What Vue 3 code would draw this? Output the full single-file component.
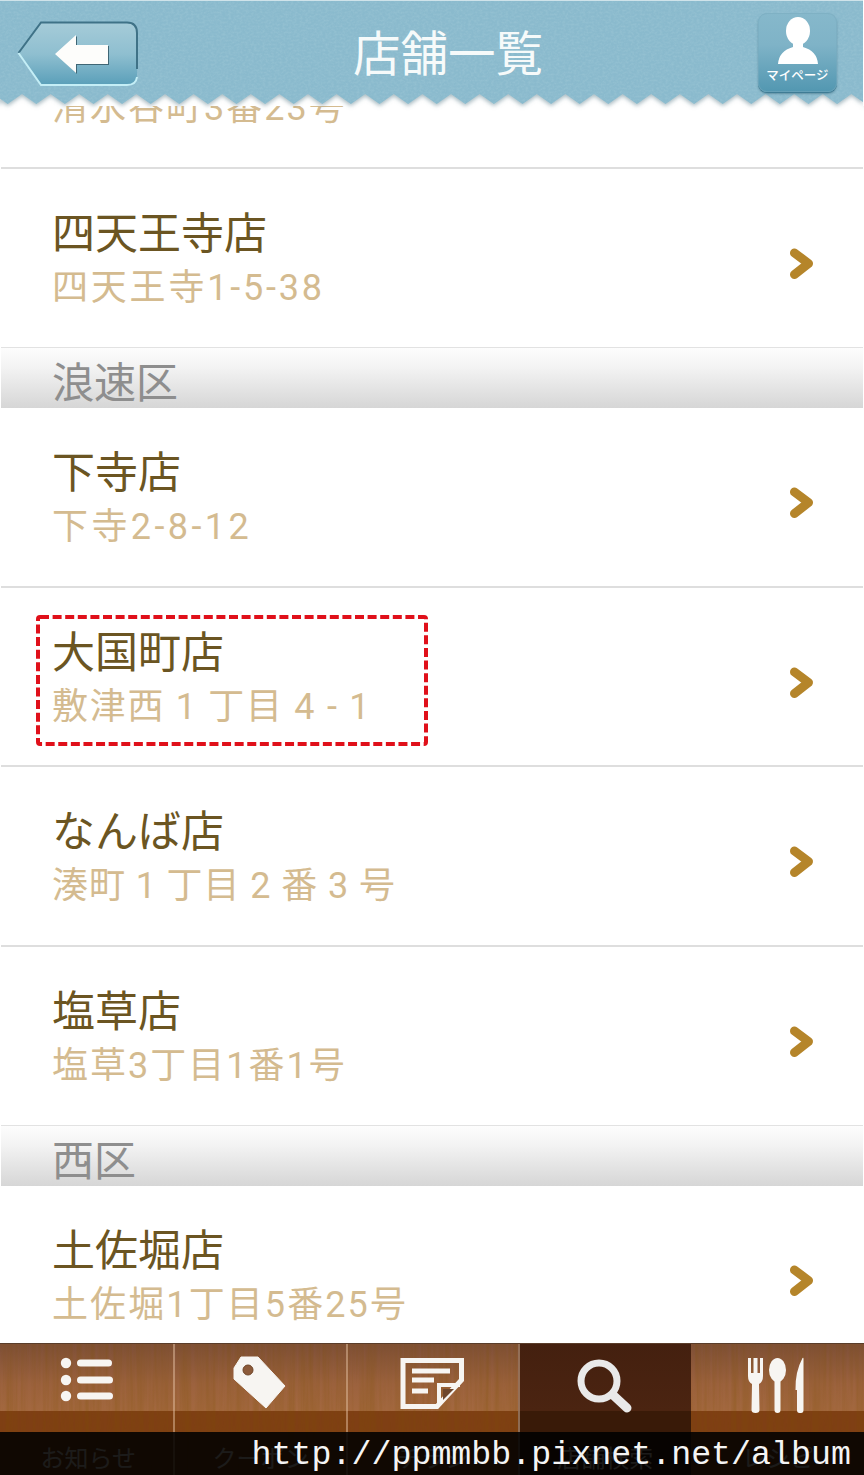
<script setup>
const rows = [
  { type: 'shop', name: '清水谷店', addr: '清水谷町3番23号', track: 2 },
  { type: 'shop', name: '四天王寺店', addr: '四天王寺1-5-38', track: 2.8 },
  { type: 'area', name: '浪速区' },
  { type: 'shop', name: '下寺店', addr: '下寺2-8-12', track: 3.4 },
  { type: 'shop', name: '大国町店', addr: '敷津西 1 丁目 4 - 1', track: 1.7, marked: true },
  { type: 'shop', name: 'なんば店', addr: '湊町 1 丁目 2 番 3 号', track: 0.9 },
  { type: 'shop', name: '塩草店', addr: '塩草3丁目1番1号', track: 2 },
  { type: 'area', name: '西区' },
  { type: 'shop', name: '土佐堀店', addr: '土佐堀1丁目5番25号', track: 2.1 }
]

const period = 28.6
const edge = []
for (let i = 0; i < 32; i++) {
  const x = 22 + period * (i - 1)
  edge.push(`${x.toFixed(1)},94`)
  edge.push(`${(x + period / 2).toFixed(1)},104`)
}
const wave = ['0,0', '864,0', '863,104', ...edge.reverse(), '0,104'].join(' ')
</script>

<template>
  <div class="screen">
    <div class="list">
      <template v-for="row in rows" :key="row.name">
        <div v-if="row.type === 'area'" class="area">{{ row.name }}</div>
        <div v-else class="shop">
          <div class="name">{{ row.name }}</div>
          <div class="addr" :style="{ letterSpacing: row.track + 'px' }">{{ row.addr }}</div>
          <svg class="chev" width="30" height="36" viewBox="0 0 30 36">
            <path d="M8.500 7 L22.500 17.500 L8.500 28.500" fill="none" stroke="#b5852a" stroke-width="9" stroke-linejoin="round" stroke-linecap="round" />
          </svg>
          <svg v-if="row.marked" class="mark" width="392" height="131" viewBox="0 0 392 131">
            <rect x="2" y="2" width="388" height="127" rx="2" fill="none" stroke="#e0101a" stroke-width="4" stroke-dasharray="9 3.600" />
          </svg>
        </div>
      </template>
    </div>

    <nav class="tabs">
      <svg class="wood" width="864" height="132">
        <defs>
          <filter id="grain" x="0" y="0" width="100%" height="100%">
            <feTurbulence type="fractalNoise" baseFrequency=".22 .008" numOctaves="3" seed="4" />
            <feColorMatrix values="0 0 0 0 .2  0 0 0 0 .08  0 0 0 0 0  0 0 0 1.1 -.3" />
          </filter>
          <linearGradient id="woodTop" x1="0" y1="0" x2="0" y2="1">
            <stop offset="0" stop-color="#7f5038" />
            <stop offset=".6" stop-color="#9c623e" />
            <stop offset="1" stop-color="#a3683f" />
          </linearGradient>
        </defs>
        <rect width="864" height="67" fill="url(#woodTop)" />
        <rect y="67" width="864" height="65" fill="#7f3f14" />
        <rect width="864" height="132" filter="url(#grain)" opacity=".4" />
      </svg>

      <div class="tab">
        <svg class="tab-icon" width="170" height="90" viewBox="0 0 170 90" fill="#f7f5f2">
          <circle cx="63" cy="19" r="5.200" /><circle cx="63" cy="36" r="5.200" /><circle cx="63" cy="52" r="5.200" />
          <rect x="74" y="15.500" width="35" height="7" rx="3.500" /><rect x="74" y="32.500" width="36" height="7" rx="3.500" /><rect x="74" y="48.500" width="36" height="7" rx="3.500" />
        </svg>
        <span>お知らせ</span>
      </div>
      <div class="tab">
        <svg class="tab-icon" width="170" height="90" viewBox="0 0 170 90" fill="#f7f5f2">
          <path d="M58 24 L65 13 H82 L109 42 L90 64 L58 35 Z" stroke="#f7f5f2" stroke-width="1" stroke-linejoin="round" />
          <circle cx="72" cy="26" r="5" fill="#8c5a3a" stroke="#6f4528" stroke-width="1" />
        </svg>
        <span>クーポン</span>
      </div>
      <div class="tab">
        <svg class="tab-icon" width="170" height="90" viewBox="0 0 170 90" fill="none">
          <path d="M55 16.500 H113.500 V36 L89 62.500 H55 Z" stroke="#f7f5f2" stroke-width="5" />
          <path d="M64 27 H102 M64 36 H86 M64 47 H80" stroke="#f7f5f2" stroke-width="5" />
          <path d="M91 61 V41 H112" stroke="#f7f5f2" stroke-width="4" />
          <path d="M95 45 H106 L95 56 Z" fill="#6e472d" />
        </svg>
        <span>チラシ</span>
      </div>
      <div class="tab active">
        <svg class="tab-icon" width="170" height="90" viewBox="0 0 170 90" fill="none">
          <circle cx="79" cy="37" r="18" stroke="#e9e9e9" stroke-width="7" />
          <path d="M93 51 L107 64" stroke="#e9e9e9" stroke-width="9" stroke-linecap="round" />
        </svg>
        <span>店舗検索</span>
      </div>
      <div class="tab">
        <svg class="tab-icon" width="170" height="90" viewBox="0 0 170 90" fill="#f7f5f2">
          <path d="M55 14 H58 V29 H60.500 V14 H64.500 V29 H67 V14 H70 V32 Q70 38 66 40 L66.500 66 Q66.500 69 62.500 69 Q58.500 69 58.500 66 L59 40 Q55 38 55 32 Z" />
          <ellipse cx="84.500" cy="26" rx="8.500" ry="12" />
          <path d="M81.500 34 H87.500 V66 Q87.500 69 84.500 69 Q81.500 69 81.500 66 Z" />
          <path d="M106.500 69 Q104 69 104 66 V46 H102.500 Q102 28 109.500 14 Q110.500 13 110.500 15 V66 Q110.500 69 108 69 Z" />
        </svg>
        <span>レシピ</span>
      </div>
    </nav>

    <header class="head">
      <svg class="head-bg" width="864" height="112" viewBox="0 0 864 112">
        <defs>
          <filter id="paper" x="0" y="0" width="100%" height="100%">
            <feTurbulence type="fractalNoise" baseFrequency=".35 .5" numOctaves="3" seed="7" />
            <feColorMatrix values="0 0 0 0 .35  0 0 0 0 .58  0 0 0 0 .68  0 0 0 .9 -.32" />
            <feComposite in2="SourceAlpha" operator="in" />
          </filter>
          <filter id="drop" x="-2%" y="-2%" width="104%" height="120%">
            <feDropShadow dx="0" dy="2" stdDeviation="2" flood-color="#5f7f8c" flood-opacity=".55" />
          </filter>
        </defs>
        <rect width="864" height="106" fill="#fff" />
        <polygon :points="wave" fill="#8abacd" filter="url(#drop)" />
        <polygon :points="wave" fill="#000" filter="url(#paper)" />
        <rect width="864" height="1" fill="#cfe3ea" />
        <rect x="863" width="1" height="106" fill="#fff" />
      </svg>

      <button class="back" type="button" aria-label="戻る">
        <svg width="124" height="68" viewBox="0 0 124 68">
          <defs>
            <linearGradient id="backFill" x1="0" y1="0" x2="0" y2="1">
              <stop offset="0" stop-color="#a5cbd8" />
              <stop offset=".5" stop-color="#8fbfd0" />
              <stop offset="1" stop-color="#5a9fb9" />
            </linearGradient>
          </defs>
          <path d="M1.500 34 L24 4 H110 Q120 4 120 14 V56 Q120 66 110 66 H24 Z" fill="url(#backFill)" />
          <path d="M1.500 34 L24 3.500 H110 Q120 3.500 120 14 V50" fill="none" stroke="#3f7287" stroke-width="2" />
          <path d="M1.500 34 L24 66 H110 Q119 66 120 58" fill="none" stroke="#c4eef6" stroke-width="2" />
          <path d="M60 17 V27 H92 V46 H60 V55 L41 36 Z" fill="#3f6675" />
          <path d="M59 16 V26 H91 V45 H59 V54 L38 35 Z" fill="#fdfdfb" />
        </svg>
      </button>

      <h1 class="title">店舗一覧</h1>

      <button class="mine" type="button">
        <svg width="46" height="48" viewBox="0 0 46 48" fill="#fff">
          <ellipse cx="23" cy="14" rx="12" ry="14" />
          <path d="M18 25 H28 V30 Q42 34 43 47 H3 Q4 34 18 30 Z" />
        </svg>
        <span>マイページ</span>
      </button>
    </header>

    <div class="watermark">http://ppmmbb.pixnet.net/album</div>
  </div>
</template>

<style>
html, body { margin: 0; background: #fff; }
</style>

<style scoped>
.screen {
  position: relative;
  width: 864px;
  height: 1475px;
  overflow: hidden;
  display: flex;
  flex-direction: column;
  background: #fff;
  font-family: "Noto Sans CJK JP", "Noto Sans", sans-serif;
}
.list {
  flex: 1;
  min-height: 0;
  overflow: hidden;
  margin-top: -11px;
  padding: 0 1px;
}
.shop {
  position: relative;
  box-sizing: border-box;
  height: 179.600px;
  padding: 34px 0 0 51px;
  border-bottom: 2px solid #dedede;
}
.shop:has(+ .area) {
  height: 178px;
  border-bottom: 0;
}
.name {
  font-size: 43px;
  line-height: 54px;
  margin-bottom: 4px;
  color: #6b5522;
}
.addr {
  font-family: Roboto, "Noto Sans CJK JP", sans-serif;
  font-size: 36px;
  line-height: 54px;
  color: #d4bb90;
  white-space: pre;
}
.chev {
  position: absolute;
  right: 47px;
  top: 77px;
}
.mark {
  position: absolute;
  left: 35px;
  top: 27.500px;
}
.area {
  box-sizing: border-box;
  height: 61.500px;
  padding: 4px 0 0 51px;
  border-top: 1px solid #e2e2e2;
  background: linear-gradient(#fdfdfd, #f4f4f4 30%, #d6d6d6);
  font-size: 42px;
  line-height: 56px;
  color: #8e8e8e;
}
.head {
  position: absolute;
  left: 0;
  top: 0;
  width: 864px;
  height: 106px;
  box-sizing: border-box;
  display: flex;
  align-items: flex-start;
  padding: 0 27px 0 17px;
}
.head-bg {
  position: absolute;
  left: 0;
  top: 0;
}
.back {
  position: relative;
  margin: 19px 0 0;
  padding: 0;
  border: 0;
  background: none;
  width: 124px;
  height: 68px;
  flex: none;
}
.back svg { display: block; }
.title {
  position: relative;
  flex: 1;
  margin: 17px 3px 0 0;
  text-align: center;
  font-size: 47.500px;
  line-height: 68px;
  font-weight: 400;
  color: #f6fafa;
}
.mine {
  position: relative;
  flex: none;
  width: 79px;
  height: 79px;
  margin: 13px 0 0;
  padding: 4px 0 0;
  border: 0;
  border-radius: 9px;
  background: linear-gradient(#86b8cb, #7fb3c7 40%, #5297b1);
  box-shadow: 0 1px 0 #3f7c95, 0 2px 2px rgba(40, 90, 110, .45), inset 0 0 0 1px rgba(120, 170, 190, .5);
  display: flex;
  flex-direction: column;
  align-items: center;
  font-family: inherit;
}
.mine span {
  font-size: 12.500px;
  font-weight: 500;
  line-height: 16px;
  margin-top: 2px;
  color: #fff;
  white-space: nowrap;
}
.tabs {
  position: relative;
  flex: none;
  height: 132px;
  display: flex;
  padding: 0 1px;
  box-sizing: border-box;
  border-top: 1px solid #5a3d2a;
}
.wood {
  position: absolute;
  left: 0;
  top: 0;
}
.tab {
  position: relative;
  flex: none;
  width: 172.400px;
  box-sizing: border-box;
  display: flex;
  flex-direction: column;
  align-items: center;
  border-left: 2px solid rgba(226, 190, 160, .5);
}
.tab:first-of-type { border-left-color: transparent; }
.tab.active {
  background: linear-gradient(#44200f 0, #4b2411 67px, #391a08 67px);
}
.tab.active + .tab { border-left-color: transparent; }
.tab-icon { display: block; flex: none; }
.tab span {
  margin-top: 8px;
  font-size: 24px;
  line-height: 30px;
  color: #d9d0c6;
  white-space: nowrap;
}
.watermark {
  position: absolute;
  left: 0;
  right: 0;
  bottom: 0;
  height: 43px;
  box-sizing: border-box;
  padding-right: 13px;
  background: rgba(0, 0, 0, .87);
  text-align: right;
  font-family: "Liberation Mono", monospace;
  font-size: 33.300px;
  line-height: 46px;
  color: #f4f4f4;
  white-space: nowrap;
}
</style>
